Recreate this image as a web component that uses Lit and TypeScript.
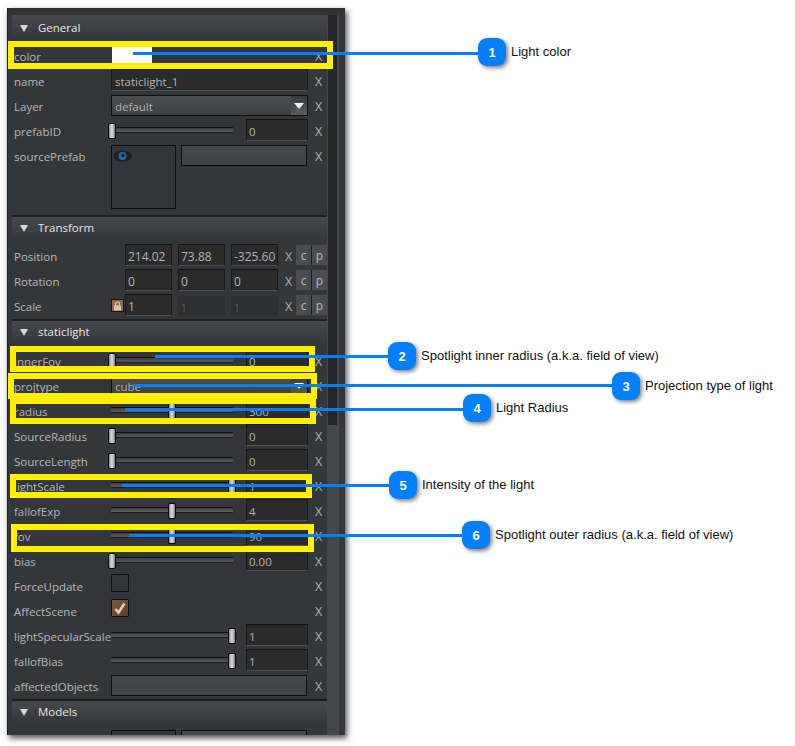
import { LitElement, html, css } from "lit";
import { customElement } from "lit/decorators.js";

type Row =
  | { k: "text"; l: string; v: string }
  | { k: "color"; l: string }
  | { k: "select"; l: string; v: string }
  | { k: "slider"; l: string; p: number; v: string }
  | { k: "prefab"; l: string; noX?: boolean }
  | { k: "vec"; l: string; v: string[]; lock?: boolean }
  | { k: "check"; l: string; on: boolean }
  | { k: "wide"; l: string };

const general: Row[] = [
  { k: "color", l: "color" },
  { k: "text", l: "name", v: "staticlight_1" },
  { k: "select", l: "Layer", v: "default" },
  { k: "slider", l: "prefabID", p: 0, v: "0" },
  { k: "prefab", l: "sourcePrefab" },
];
const transform: Row[] = [
  { k: "vec", l: "Position", v: ["214.02", "73.88", "-325.60"] },
  { k: "vec", l: "Rotation", v: ["0", "0", "0"] },
  { k: "vec", l: "Scale", v: ["1", "1", "1"], lock: true },
];
const staticlight: Row[] = [
  { k: "slider", l: "innerFov", p: 0, v: "0" },
  { k: "select", l: "projtype", v: "cube" },
  { k: "slider", l: "radius", p: 50, v: "300" },
  { k: "slider", l: "SourceRadius", p: 0, v: "0" },
  { k: "slider", l: "SourceLength", p: 0, v: "0" },
  { k: "slider", l: "lightScale", p: 100, v: "1" },
  { k: "slider", l: "fallofExp", p: 50, v: "4" },
  { k: "slider", l: "fov", p: 50, v: "90" },
  { k: "slider", l: "bias", p: 0, v: "0.00" },
  { k: "check", l: "ForceUpdate", on: false },
  { k: "check", l: "AffectScene", on: true },
  { k: "slider", l: "lightSpecularScale", p: 100, v: "1" },
  { k: "slider", l: "fallofBias", p: 100, v: "1" },
  { k: "wide", l: "affectedObjects" },
];

const boxes = [
  [8, 41, 325, 28],
  [10, 346, 305, 26],
  [8, 373, 309, 26],
  [10, 398, 306, 26],
  [10, 474, 302, 24],
  [11, 524, 303, 28],
];
const callouts = [
  { n: 1, t: "Light color", x1: 133, bx: 478, ly: 52, by: 38, lx: 511, cy: 44 },
  { n: 2, t: "Spotlight inner radius (a.k.a. field of view)", x1: 155, bx: 388, ly: 355, by: 342, lx: 421, cy: 348 },
  { n: 3, t: "Projection type of light", x1: 133, bx: 612, ly: 384, by: 372, lx: 645, cy: 378 },
  { n: 4, t: "Light Radius", x1: 125, bx: 463, ly: 408, by: 394, lx: 496, cy: 400 },
  { n: 5, t: "Intensity of the light", x1: 122, bx: 389, ly: 484, by: 471, lx: 422, cy: 477 },
  { n: 6, t: "Spotlight outer radius (a.k.a. field of view)", x1: 129, bx: 462, ly: 534, by: 521, lx: 495, cy: 527 },
];

@customElement("app-root")
export class AppRoot extends LitElement {
  static styles = css`
    :host { display: block; width: 795px; height: 746px; position: relative; overflow: hidden; background: #fff; font-family: "Open Sans", sans-serif; }
    .panel { margin: 8px 0 0 7px; width: 338px; height: 727px; box-sizing: border-box; background: linear-gradient(#2f3234, #34373a 10px); box-shadow: 2px 3px 6px rgba(0,0,0,.7); display: flex; overflow: hidden; border-left: 1px solid #1d1f20; }
    .content { width: 315px; margin: 7px 0 0 4px; background: #34373a; flex: none; overflow: hidden; }
    .bar { width: 12px; margin-top: 7px; flex: none; background: #45474a; padding: 0 2px 0 1px; box-sizing: border-box; }
    .thumb { height: 410px; background: #232425; }
    .sec { height: 25px; display: flex; align-items: center; background: linear-gradient(#47494d, #33363a); color: #e6e6e6; font-size: 11.5px; box-sizing: border-box; padding: 0 0 2px 26px; position: relative; border-top: 2px solid #1c1e20; }
    .sec.first { border-top: 0; padding-bottom: 0; }
    .sec::before { content: ""; position: absolute; left: 8px; top: 8px; border-left: 4px solid transparent; border-right: 4px solid transparent; border-top: 7px solid #d8d8d8; }
    .sec.first::before { top: 10px; }
    .m4 { margin-bottom: 4px; }
    .m5 { margin-bottom: 5px; }
    .row { height: 25px; display: flex; align-items: flex-start; position: relative; color: #b4b6b8; font-size: 11.5px; }
    .label { width: 99px; height: 25px; line-height: 25px; padding-left: 2px; box-sizing: border-box; flex: none; white-space: nowrap; }
    .x { position: absolute; left: 303px; top: 6px; font-size: 12.5px; color: #aeb0b2; line-height: 14px; }
    .input { height: 22px; box-sizing: border-box; background: #2b2b2b; border: 1px solid #1a1a1a; border-bottom-color: #505254; border-top-color: #141414; color: #b0b2b4; font-size: 11.5px; padding: 4px 0 0 2px; line-height: 15px; white-space: nowrap; overflow: hidden; }
    .wide-input { width: 197px; padding-left: 3px; }
    .swatch { width: 40px; height: 17px; background: #fff; margin: 3px 0 0 1px; }
    .select { width: 197px; height: 21px; margin-top: 1px; box-sizing: border-box; border: 1px solid #0e0e0e; background: linear-gradient(#4d4f53, #3d3f42); color: #aeb0b2; font-size: 11.5px; padding: 3px 0 0 3px; line-height: 15px; position: relative; }
    .arrow { position: absolute; right: 0; top: 0; bottom: 0; width: 16px; background: linear-gradient(#3a3b3d, #5a5b5d); }
    .arrow::after { content: ""; position: absolute; left: 3px; top: 7px; border-left: 5px solid transparent; border-right: 5px solid transparent; border-top: 6px solid #f4f4f4; }
    .slider { width: 122px; height: 25px; position: relative; flex: none; }
    .track { position: absolute; left: 0; right: 0; top: 8px; height: 6px; box-sizing: border-box; border-top: 1px solid #0e0e0e; border-bottom: 1px solid #1a1b1c; background: linear-gradient(#3a3c3f, #5a5c5f); border-radius: 1px; }
    .handle { position: absolute; top: 4px; width: 8px; height: 16px; box-sizing: border-box; border: 1px solid #0a0a0a; border-radius: 2px; background: linear-gradient(90deg, #8a8a8a, #dedede 50%, #7a7a7a); }
    .num { position: absolute; left: 234px; top: 0; width: 62px; }
    .prefab-row { height: 71px; }
    .thumbbox { width: 65px; height: 64px; box-sizing: border-box; border: 1px solid #0c0c0c; margin-top: 1px; position: relative; flex: none; }
    .thumbbox svg { position: absolute; left: 1px; top: 4px; }
    .prefab-field { width: 126px; height: 21px; box-sizing: border-box; margin: 1px 0 0 5px; border: 1px solid #0e0e0e; background: linear-gradient(#47494d, #3f4144); }
    .vec { display: flex; gap: 6px; position: absolute; left: 113px; top: 0; }
    .vec .input { width: 47px; font-size: 12px; }
    .vec .input.off { background: #2d2f31; border-color: #2d2f31; color: #5c5e60; font-size: 10px; line-height: 13px; padding-top: 5px; height: 20px; margin-top: 2px; }
    .vx { position: absolute; left: 273px; top: 6px; font-size: 12.5px; line-height: 14px; color: #aeb0b2; }
    .cp { position: absolute; left: 284px; top: 1px; display: flex; }
    .cp span { width: 16px; height: 20px; box-sizing: border-box; background: #4a4c50; color: #b8babc; font-size: 12px; line-height: 21px; text-align: center; border-right: 1px solid #1c1c1c; }
    .cp span:last-child { width: 15px; border-right: 0; }
    .lock { position: absolute; left: 99px; top: 5px; width: 13px; height: 13px; box-sizing: border-box; background: #8a6a50; border: 1px solid #141414; display: flex; align-items: center; justify-content: center; }
    .check { width: 18px; height: 18px; box-sizing: border-box; border: 1px solid #0e0e0e; border-radius: 1px; position: relative; background: #34373a; }
    .check.on { background: linear-gradient(135deg, #7c5c3e, #5a3f28); }
    .check svg { position: absolute; left: 1px; top: 1px; }
    .wide-field { width: 196px; height: 21px; margin-top: 1px; box-sizing: border-box; border: 1px solid #0e0e0e; background: linear-gradient(#47494d, #3f4144); }
    .overlay { position: absolute; left: 0; top: 0; }
    .box { position: absolute; box-sizing: border-box; border: 6px solid #fff000; }
    .line { position: absolute; height: 3px; background: #007fff; }
    .badge { position: absolute; width: 28px; height: 28px; border-radius: 9px; background: #007fff; color: #fff; font: bold 13px "Liberation Sans", sans-serif; display: flex; align-items: center; justify-content: center; box-shadow: 2px 2px 4px rgba(0,0,0,.5); }
    .cap { position: absolute; font: 13px/16px "Liberation Sans", sans-serif; color: #111; white-space: nowrap; }
  `;

  private renderRow(r: Row) {
    const x = html`<span class="x">X</span>`;
    const label = html`<span class="label">${r.l}</span>`;
    switch (r.k) {
      case "color":
        return html`<div class="row">${label}<div class="swatch"></div>${x}</div>`;
      case "text":
        return html`<div class="row">${label}<div class="input wide-input">${r.v}</div>${x}</div>`;
      case "select":
        return html`<div class="row">${label}<div class="select">${r.v}<span class="arrow"></span></div>${x}</div>`;
      case "slider":
        return html`<div class="row">${label}<div class="slider"><div class="track"></div><div class="handle" style="left:${(r.p / 100) * 120 - 3}px"></div></div><div class="input num">${r.v}</div>${x}</div>`;
      case "prefab":
        return html`<div class="row prefab-row">${label}<div class="thumbbox">${this.eye()}</div><div class="prefab-field"></div>${r.noX ? "" : x}</div>`;
      case "vec":
        return html`<div class="row">${label}${r.lock ? html`<span class="lock">${this.lock()}</span>` : ""}
          <div class="vec">${r.v.map((v, i) => html`<div class="input ${r.lock && i > 0 ? "off" : ""}">${v}</div>`)}</div>
          <span class="vx">X</span><div class="cp"><span>c</span><span>p</span></div></div>`;
      case "check":
        return html`<div class="row">${label}<div class="check ${r.on ? "on" : ""}">${r.on ? this.tick() : ""}</div>${x}</div>`;
      case "wide":
        return html`<div class="row">${label}<div class="wide-field"></div>${x}</div>`;
    }
  }
  private eye() {
    return html`<svg width="19" height="12" viewBox="0 0 19 12"><ellipse cx="9.5" cy="6" rx="9.5" ry="5.5" fill="#1e2124"/><circle cx="9.5" cy="6" r="4" fill="#1c6cab"/><circle cx="10" cy="5.5" r="1.8" fill="#0a1520"/></svg>`;
  }
  private lock() {
    return html`<svg width="9" height="10" viewBox="0 0 9 10" style="display:block"><path d="M2.5 5V3a2 2 0 0 1 4 0V5" fill="none" stroke="#e4c8b0" stroke-width="1.2"/><rect x="1" y="4.5" width="7" height="5" fill="#e0c4aa"/></svg>`;
  }
  private tick() {
    return html`<svg width="14" height="14" viewBox="0 0 14 14"><path d="M2.5 8 L5.5 11.5 L11.5 2.5" fill="none" stroke="#e0cdb0" stroke-width="2.6"/></svg>`;
  }

  render() {
    return html`
      <div class="panel">
        <div class="content">
          <div class="sec first m4">General</div>
          ${general.map((r) => this.renderRow(r))}
          <div class="sec m4">Transform</div>
          ${transform.map((r) => this.renderRow(r))}
          <div class="sec m5">staticlight</div>
          ${staticlight.map((r) => this.renderRow(r))}
          <div class="sec m5">Models</div>
          ${this.renderRow({ k: "prefab", l: "", noX: true })}
        </div>
        <div class="bar"><div class="thumb"></div></div>
      </div>
      <div class="overlay">
        ${boxes.map(([l, t, w, h]) => html`<div class="box" style="left:${l}px;top:${t}px;width:${w}px;height:${h}px"></div>`)}
        ${callouts.map((c) => html`
          <div class="line" style="left:${c.x1}px;top:${c.ly}px;width:${c.bx - c.x1 + 2}px"></div>
          <div class="badge" style="left:${c.bx}px;top:${c.by}px">${c.n}</div>
          <div class="cap" style="left:${c.lx}px;top:${c.cy}px">${c.t}</div>`)}
      </div>`;
  }
}
